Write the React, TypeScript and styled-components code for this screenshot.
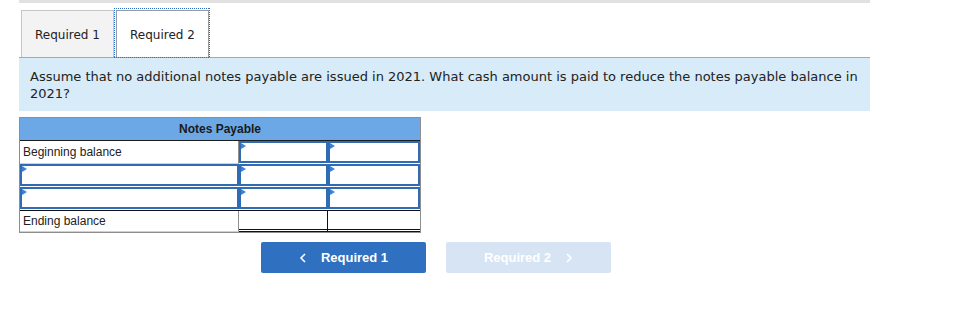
import styled, { createGlobalStyle } from "styled-components";

const GlobalStyle = createGlobalStyle`
  body {
    margin: 0;
    background: #fff;
    font-family: "DejaVu Sans", Verdana, sans-serif;
  }
`;

const Page = styled.div`
  width: 851px;
  padding-left: 19px;
`;

const TopBar = styled.div`
  height: 3px;
  background: #e1e1e1;
`;

const TabRow = styled.div`
  display: flex;
  align-items: flex-end;
  margin-top: 7px;
  padding-left: 2px;
`;

const dots = (dir: string) =>
  `repeating-linear-gradient(${dir}, #2c6fd1 0 1px, transparent 1px 2px)`;

const Tab = styled.div<{ $active?: boolean }>`
  width: 93px;
  height: 47px;
  padding-top: 2px;
  display: flex;
  align-items: center;
  justify-content: center;
  box-sizing: border-box;
  font-size: 12px;
  color: #222;
  background: ${(p) => (p.$active ? "#fff" : "#f3f3f3")};
  border: 1px solid ${(p) => (p.$active ? "#9a9a9a" : "#c6c6c6")};
  border-bottom: none;
  margin-left: ${(p) => (p.$active ? "2px" : "0")};
  position: relative;
  z-index: ${(p) => (p.$active ? 1 : 0)};

  &::after {
    content: "";
    display: ${(p) => (p.$active ? "block" : "none")};
    position: absolute;
    top: -3px;
    left: -3px;
    right: -2px;
    bottom: -1px;
    background:
      ${dots("90deg")} top left / 100% 1px no-repeat,
      ${dots("90deg")} bottom left / 100% 1px no-repeat,
      ${dots("180deg")} top left / 1px 100% no-repeat,
      ${dots("180deg")} top right / 1px 100% no-repeat;
    pointer-events: none;
  }
`;

const Question = styled.div`
  background: #d7ebf9;
  border-top: 1px solid #a8a8a8;
  padding: 10px 11px 9px 11px;
  font-size: 13px;
  line-height: 17px;
  color: #222;
`;

const Table = styled.div`
  width: 402px;
  box-sizing: border-box;
  margin-top: 6px;
  border: 1px solid #8e8e8e;
  font-family: "Liberation Sans", Arial, sans-serif;
  font-size: 12px;
  color: #222;
`;

const HeaderRow = styled.div`
  height: 22px;
  background: #6da8e6;
  border-bottom: 1px solid #1d1d1d;
  display: flex;
  align-items: center;
  justify-content: center;
  font-weight: bold;
  color: #1a1a1a;
`;

const Row = styled.div<{ $total?: boolean }>`
  display: grid;
  grid-template-columns: 219px 89px 1fr;
  height: ${(p) => (p.$total ? "21px" : "23px")};
  border-top: ${(p) => (p.$total ? "1px solid #111" : "none")};
`;

const Label = styled.div`
  display: flex;
  align-items: center;
  padding-left: 3px;
  border-right: 1px solid #8e8e8e;
  border-bottom: 1px solid #d0d0d0;
`;

const Input = styled.div`
  position: relative;
  box-sizing: border-box;
  border: 2px solid #2f6cb4;
  background: #fff;
  margin: 0 0 1px 0;

  &::before {
    content: "";
    position: absolute;
    top: 0;
    left: 0;
    border-top: 3px solid transparent;
    border-bottom: 3px solid transparent;
    border-left: 5px solid #3b82dc;
  }
`;

const TotalCell = styled.div<{ $last?: boolean }>`
  border-right: ${(p) => (p.$last ? "none" : "1px solid #111")};
  border-bottom: 3px double #111;
  box-sizing: border-box;
`;

const ButtonRow = styled.div`
  display: flex;
  gap: 20px;
  margin-top: 9px;
  padding-left: 242px;
`;

const NavButton = styled.div<{ $disabled?: boolean }>`
  width: 165px;
  height: 31px;
  border-radius: 2px;
  display: flex;
  align-items: center;
  justify-content: center;
  gap: 14px;
  background: ${(p) => (p.$disabled ? "#d6e4f4" : "#2f70c0")};
  color: #fff;
  font-family: "Liberation Sans", Arial, sans-serif;
  font-weight: bold;
  font-size: 13px;
`;

const Chevron = styled.svg`
  width: 8px;
  height: 10px;
`;

const App = () => {
  return (
    <Page>
      <GlobalStyle />
      <TopBar />
      <TabRow>
        <Tab>Required 1</Tab>
        <Tab $active>Required 2</Tab>
      </TabRow>
      <Question>
        Assume that no additional notes payable are issued in 2021. What cash
        amount is paid to reduce the notes payable balance in 2021?
      </Question>
      <Table>
        <HeaderRow>Notes Payable</HeaderRow>
        <Row>
          <Label>Beginning balance</Label>
          <Input />
          <Input />
        </Row>
        <Row>
          <Input />
          <Input />
          <Input />
        </Row>
        <Row>
          <Input />
          <Input />
          <Input />
        </Row>
        <Row $total>
          <Label>Ending balance</Label>
          <TotalCell />
          <TotalCell $last />
        </Row>
      </Table>
      <ButtonRow>
        <NavButton>
          <Chevron viewBox="0 0 8 10">
            <path d="M6 1 L2 5 L6 9" fill="none" stroke="#fff" strokeWidth="1.6" />
          </Chevron>
          Required 1
        </NavButton>
        <NavButton $disabled>
          Required 2
          <Chevron viewBox="0 0 8 10">
            <path d="M2 1 L6 5 L2 9" fill="none" stroke="#fff" strokeWidth="1.6" />
          </Chevron>
        </NavButton>
      </ButtonRow>
    </Page>
  );
};

export default App;
